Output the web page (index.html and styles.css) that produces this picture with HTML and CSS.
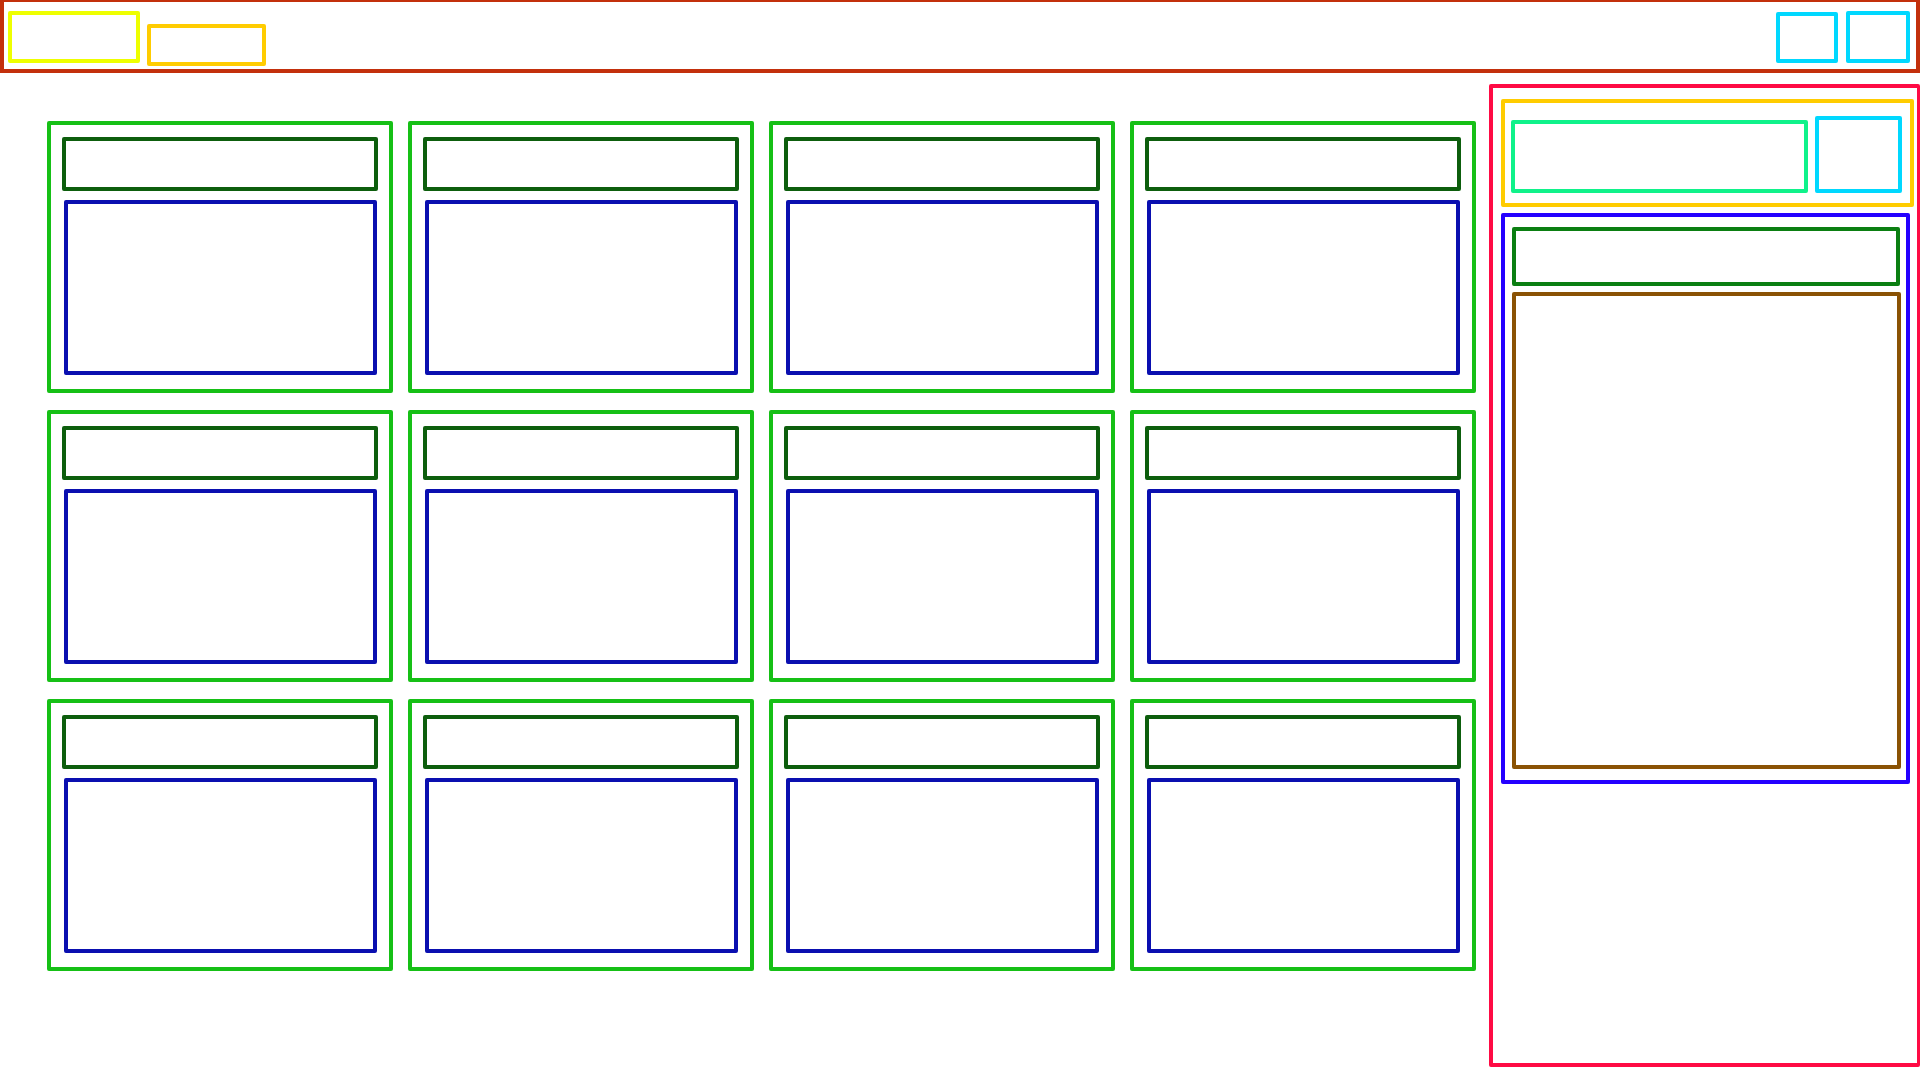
FILE: index.html
```html
<!DOCTYPE html>
<html lang="en">
<head>
    <meta charset="UTF-8">
    <meta name="viewport" content="width=device-width, initial-scale=1.0">
    <title>Board</title>
    <link rel="stylesheet" href="styles.css">
</head>
<body>
    <header class="topbar">
        <div class="logo"></div>
        <div class="nav-tab"></div>
        <div class="top-actions">
            <div class="icon-btn"></div>
            <div class="icon-btn wide"></div>
        </div>
    </header>

    <div class="layout">
        <main class="board">
            <div class="card"><div class="card-title"></div><div class="card-body"></div></div>
            <div class="card"><div class="card-title"></div><div class="card-body"></div></div>
            <div class="card"><div class="card-title"></div><div class="card-body"></div></div>
            <div class="card"><div class="card-title"></div><div class="card-body"></div></div>
            <div class="card"><div class="card-title"></div><div class="card-body"></div></div>
            <div class="card"><div class="card-title"></div><div class="card-body"></div></div>
            <div class="card"><div class="card-title"></div><div class="card-body"></div></div>
            <div class="card"><div class="card-title"></div><div class="card-body"></div></div>
            <div class="card"><div class="card-title"></div><div class="card-body"></div></div>
            <div class="card"><div class="card-title"></div><div class="card-body"></div></div>
            <div class="card"><div class="card-title"></div><div class="card-body"></div></div>
            <div class="card"><div class="card-title"></div><div class="card-body"></div></div>
        </main>

        <aside class="sidebar">
            <div class="side-head">
                <div class="search"></div>
                <div class="side-btn"></div>
            </div>
            <div class="side-panel">
                <div class="panel-title"></div>
                <div class="panel-body"></div>
            </div>
        </aside>
    </div>
</body>
</html>
```

FILE: styles.css
```css
:root {
    --line: 4px;
    --header-red: #c3300c;
    --logo-yellow: #eeff00;
    --tab-gold: #ffcc00;
    --cyan: #00d8ff;
    --card-green: #16c016;
    --title-green: #0d5e0d;
    --body-blue: #0a0fb0;
    --side-red: #ff0a44;
    --search-green: #10f28a;
    --panel-blue: #2400ff;
    --panel-green: #0b7f12;
    --brown: #8a5204;
}

* {
    box-sizing: border-box;
}

body {
    margin: 0;
    background: #fff;
    font-family: 'Liberation Sans', Arial, sans-serif;
    width: 1920px;
    height: 1080px;
    overflow: hidden;
}

/* top bar */
.topbar {
    height: 73px;
    border: var(--line) solid var(--header-red);
    border-top-width: 2px;
    display: flex;
    align-items: flex-start;
}

.logo {
    width: 132px;
    height: 52px;
    margin: 9px 0 0 4px;
    border: var(--line) solid var(--logo-yellow);
    border-radius: 2px;
}

.nav-tab {
    width: 119px;
    height: 42px;
    margin: 22px 0 0 7px;
    border: var(--line) solid var(--tab-gold);
    border-radius: 2px;
}

.top-actions {
    margin-left: auto;
    margin-right: 6px;
    display: flex;
    gap: 8px;
}

.icon-btn {
    width: 62px;
    height: 51px;
    margin-top: 10px;
    border: var(--line) solid var(--cyan);
    border-radius: 2px;
}

.icon-btn.wide {
    width: 64px;
    height: 52px;
    margin-top: 9px;
}

/* main area */
.layout {
    display: flex;
    align-items: flex-start;
}

.board {
    padding: 48px 0 0 47px;
    display: grid;
    grid-template-columns: repeat(4, 346px);
    grid-auto-rows: 272px;
    column-gap: 15px;
    row-gap: 17px;
}

.card {
    border: var(--line) solid var(--card-green);
    border-radius: 2px;
    padding: 12px 11px 14px 11px;
    display: flex;
    flex-direction: column;
    gap: 9px;
}

.card-title {
    height: 54px;
    border: var(--line) solid var(--title-green);
    border-radius: 2px;
}

.card-body {
    height: 175px;
    margin: 0 1px 0 2px;
    border: var(--line) solid var(--body-blue);
    border-radius: 2px;
}

/* sidebar */
.sidebar {
    width: 431px;
    height: 983px;
    margin: 11px 0 0 auto;
    border: var(--line) solid var(--side-red);
    border-right-width: 3px;
    border-radius: 2px;
    padding: 11px 0 0 8px;
    display: flex;
    flex-direction: column;
    gap: 6px;
}

.side-head {
    width: 413px;
    height: 108px;
    border: var(--line) solid var(--tab-gold);
    border-radius: 2px;
    padding: 0 8px 10px 6px;
    display: flex;
    align-items: flex-end;
    gap: 7px;
}

.search {
    width: 297px;
    height: 73px;
    border: var(--line) solid var(--search-green);
    border-radius: 2px;
}

.side-btn {
    width: 87px;
    height: 77px;
    border: var(--line) solid var(--cyan);
    border-radius: 2px;
}

.side-panel {
    width: 409px;
    height: 571px;
    border: var(--line) solid var(--panel-blue);
    border-radius: 2px;
    padding: 10px 5px 11px 7px;
    display: flex;
    flex-direction: column;
    gap: 6px;
}

.panel-title {
    width: 388px;
    height: 59px;
    border: var(--line) solid var(--panel-green);
    border-radius: 2px;
}

.panel-body {
    width: 389px;
    height: 477px;
    border: var(--line) solid var(--brown);
    border-radius: 2px;
}
```
